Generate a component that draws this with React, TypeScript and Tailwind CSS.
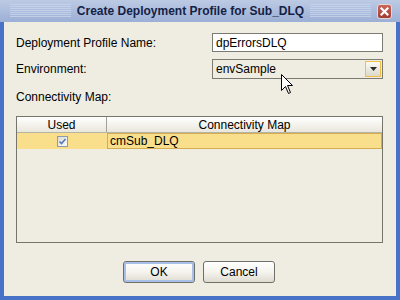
import React from 'react';

const font = { fontFamily: '"Liberation Sans", Arial, sans-serif' };

// 제목 표시줄의 가로 줄무늬
function Stripes() {
  return (
    <div className="flex-1 h-[14px] mx-[6px] bg-[repeating-linear-gradient(to_bottom,#c9d5ec_0px,#c9d5ec_1px,transparent_1px,transparent_2px)] opacity-80" />
  );
}

function CloseButton() {
  return (
    <div className="w-[15px] h-[15px] rounded-[3px] border border-[#e8d6d2] bg-gradient-to-b from-[#c9675c] to-[#a13c33] flex items-center justify-center">
      <svg width="9" height="9" viewBox="0 0 9 9">
        <path d="M1.5 1.5 L7.5 7.5 M7.5 1.5 L1.5 7.5" stroke="#ffffff" strokeWidth="2.2" strokeLinecap="square" />
      </svg>
    </div>
  );
}

function Cursor() {
  return (
    <svg className="absolute left-[281px] top-[74px]" width="13" height="20" viewBox="0 0 13 20">
      <path d="M0.5 0.5 L0.5 16.5 L4.5 12.5 L7.5 19.5 L9.5 18.5 L6.5 11.5 L11.5 11.5 Z" fill="#ffffff" stroke="#000000" strokeWidth="1" />
    </svg>
  );
}

function Button({ label, focused }: { label: string; focused?: boolean }) {
  return (
    <div
      className={`w-[72px] h-[22px] rounded-[3px] border border-[#6f6f6a] bg-gradient-to-b from-[#ffffff] via-[#f5f4ee] to-[#dedbd0] flex items-center justify-center text-[12px] text-black ${focused ? 'shadow-[inset_0_0_0_2px_#a8c0e8]' : ''}`}
    >
      {label}
    </div>
  );
}

export default function App() {
  return (
    <div className="relative w-[400px] h-[300px] flex flex-col bg-[#4672c8] overflow-hidden" style={font}>
      {/* 제목 표시줄 */}
      <div className="h-[22px] flex items-center bg-gradient-to-b from-[#bccae4] to-[#9cafd5] pl-[4px]">
        <Stripes />
        <span className="text-[12px] font-bold text-[#142245] whitespace-nowrap">Create Deployment Profile for Sub_DLQ</span>
        <Stripes />
        <div className="mr-[8px] ml-[0px]">
          <CloseButton />
        </div>
      </div>

      {/* 본문 */}
      <div className="flex-1 mx-[4px] mb-[4px] bg-[#efede2] flex flex-col pl-[12px] pr-[13px] text-[12px] text-black">
        <div className="mt-[11px] flex items-center h-[19px]">
          <span className="w-[196px]">Deployment Profile Name:</span>
          <div className="flex-1 h-[19px] border border-[#7b7b72] bg-white flex items-center pl-[3px]">dpErrorsDLQ</div>
        </div>

        <div className="mt-[7px] flex items-center h-[20px]">
          <span className="w-[196px]">Environment:</span>
          <div className="flex-1 h-[20px] border border-[#7b7b72] bg-[#efede2] flex items-center pl-[3px] pr-[1px]">
            <span className="flex-1">envSample</span>
            <div className="w-[16px] h-[16px] border border-[#f2bd48] bg-gradient-to-b from-[#fbfaf5] to-[#dcd9cc] flex items-center justify-center">
              <svg width="7" height="4" viewBox="0 0 7 4">
                <path d="M0 0 H7 L3.5 4 Z" fill="#2a2a2a" />
              </svg>
            </div>
          </div>
        </div>

        <div className="mt-[11px] h-[14px] leading-[14px]">Connectivity Map:</div>

        {/* 표 */}
        <div className="mt-[12px] h-[127px] border border-[#75756b] flex flex-col">
          <div className="h-[16px] flex border-b border-[#b5b3a8] bg-gradient-to-b from-[#ffffff] to-[#e9e7dc]">
            <div className="w-[90px] border-r border-[#a3a196] flex items-center justify-center">Used</div>
            <div className="flex-1 flex items-center justify-center">Connectivity Map</div>
          </div>
          <div className="h-[16px] flex bg-[#f9df8b]">
            <div className="w-[90px] flex items-center justify-center">
              <div className="w-[11px] h-[11px] border border-[#8a9ab3] bg-gradient-to-br from-[#dcdcd4] to-[#fbfbf8] flex items-center justify-center">
                <svg width="9" height="9" viewBox="0 0 9 9">
                  <path d="M1.5 4.5 L3.5 6.5 L7.5 2" stroke="#5577bd" strokeWidth="1.6" fill="none" />
                </svg>
              </div>
            </div>
            <div className="flex-1 border border-[#d4ad50] flex items-center pl-[2px]">cmSub_DLQ</div>
          </div>
        </div>

        <div className="mt-[18px] flex justify-center gap-[8px] pr-[1px]">
          <Button label="OK" focused />
          <Button label="Cancel" />
        </div>
      </div>

      <Cursor />
    </div>
  );
}
